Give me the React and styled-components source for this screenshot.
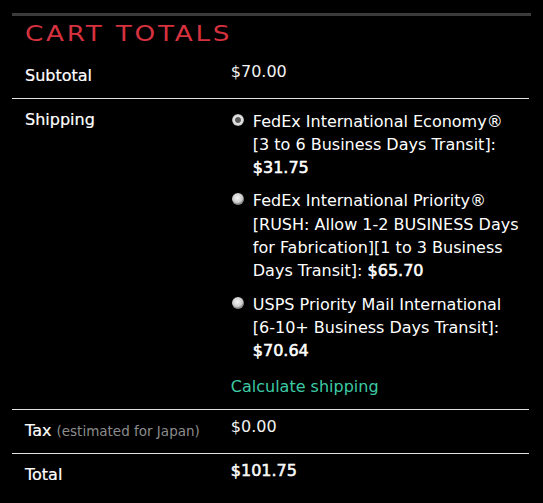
import React from "react";
import styled, { createGlobalStyle } from "styled-components";

const Global = createGlobalStyle`
  html, body { margin: 0; padding: 0; background: #000; }
  body { font-family: "DejaVu Sans", "Noto Sans", sans-serif; color: #fff; }
  * { box-sizing: border-box; }
`;

const Panel = styled.section`
  width: 531px;
  padding: 13px 0 0 12px;
  background: #000;
  min-height: 503px;
`;

const TopBar = styled.div`
  height: 3px;
  background: #3b3b3b;
`;

const Title = styled.h2`
  margin: 6px 0 8px 13px;
  font-family: "DejaVu Sans", sans-serif;
  font-weight: 400;
  font-size: 21px;
  line-height: 25.2px;
  letter-spacing: 2.2px;
  color: #d6313e;
  display: inline-block;
  transform: scaleX(1.25);
  transform-origin: left center;
`;

const Table = styled.div`
  width: 517px;
`;

const Row = styled.div`
  display: grid;
  grid-template-columns: 40% 60%;
  border-top: ${(p) => (p.$first ? "none" : "1px solid #e2e2e2")};
`;

const Label = styled.div`
  padding: 9px 13px 10px;
  font-size: 16px;
  line-height: 23.3px;
  color: #fff;
  -webkit-text-stroke: 0.2px #fff;
  white-space: nowrap;
`;

const Note = styled.small`
  font-size: 13.5px;
  color: #8c8c8c;
  -webkit-text-stroke: 0;
`;

const Value = styled.div`
  padding: 5px 6px 10px 12px;
  font-size: 16px;
  line-height: 23.3px;
  color: #f2f2f2;
  -webkit-text-stroke: ${(p) => (p.$strong ? "0.55px #fff" : "0")};
`;

const Options = styled.ul`
  list-style: none;
  margin: 6px 0 0;
  padding: 0;
  display: flex;
  flex-direction: column;
  gap: 10px;
`;

const Option = styled.li`
  display: flex;
  align-items: flex-start;
  gap: 9px;
`;

const Radio = styled.span`
  flex: none;
  width: 12px;
  height: 12px;
  margin: 4px 0 0 1px;
  border-radius: 50%;
  background: ${(p) =>
    p.$checked
      ? "radial-gradient(circle at 50% 50%, #5a5a5a 0 2.4px, #9a9a9a 3px, #e8e8e8 3.6px, #d2d2d2 5.2px, #8d8d8d 6px)"
      : "radial-gradient(circle at 45% 40%, #f4f4f4 0, #dcdcdc 3px, #c4c4c4 5.2px, #8a8a8a 6px)"};
`;

const OptionText = styled.span`
  color: #fff;
`;

const Price = styled.span`
  -webkit-text-stroke: 0.55px #fff;
`;

const CalcLink = styled.a`
  display: block;
  margin-top: 13px;
  color: #3ccaa4;
  text-decoration: none;
`;

const options = [
  {
    name: "FedEx International Economy®",
    detail: "[3 to 6 Business Days Transit]:",
    price: "$31.75",
    checked: true,
  },
  {
    name: "FedEx International Priority®",
    detail: "[RUSH: Allow 1-2 BUSINESS Days for Fabrication][1 to 3 Business Days Transit]:",
    price: "$65.70",
  },
  {
    name: "USPS Priority Mail International",
    detail: "[6-10+ Business Days Transit]:",
    price: "$70.64",
  },
];

export default function App() {
  return (
    <>
      <Global />
      <Panel>
        <TopBar />
        <Title>CART TOTALS</Title>
        <Table>
          <Row $first>
            <Label>Subtotal</Label>
            <Value>$70.00</Value>
          </Row>
          <Row>
            <Label>Shipping</Label>
            <Value>
              <Options>
                {options.map((o) => (
                  <Option key={o.name}>
                    <Radio $checked={o.checked} />
                    <OptionText>
                      {o.name} {o.detail} <Price>{o.price}</Price>
                    </OptionText>
                  </Option>
                ))}
              </Options>
              <CalcLink href="#">Calculate shipping</CalcLink>
            </Value>
          </Row>
          <Row>
            <Label>
              Tax <Note>(estimated for Japan)</Note>
            </Label>
            <Value>$0.00</Value>
          </Row>
          <Row>
            <Label>Total</Label>
            <Value $strong>$101.75</Value>
          </Row>
        </Table>
      </Panel>
    </>
  );
}
